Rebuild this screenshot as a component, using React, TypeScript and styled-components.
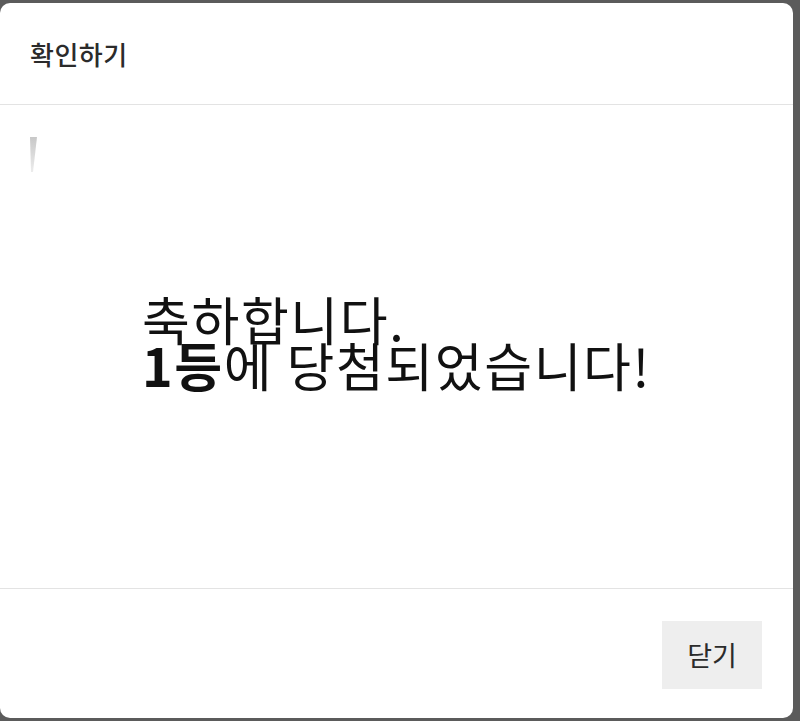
import React from 'react'
import styled, { createGlobalStyle } from 'styled-components'

const GlobalStyle = createGlobalStyle`
  html, body {
    margin: 0;
    padding: 0;
    background: #5b5b5b;
    font-family: 'Noto Sans CJK KR', 'Noto Sans', sans-serif;
  }
  #root {
    height: 721px;
    overflow: hidden;
  }
`

const Overlay = styled.div`
  height: 721px;
  padding-top: 3px;
  box-sizing: border-box;
`

const Dialog = styled.div`
  width: 793px;
  height: 715px;
  background: #ffffff;
  border-radius: 10px;
  display: flex;
  flex-direction: column;
  overflow: hidden;
`

const Header = styled.div`
  height: 102px;
  flex: none;
  display: flex;
  align-items: center;
  padding: 0 30px;
  border-bottom: 1px solid #e3e3e3;
  box-sizing: border-box;
`

const Title = styled.h2`
  margin: 0;
  font-size: 26px;
  font-weight: 500;
  color: #2b2b2b;
  letter-spacing: 0.5px;
`

const Body = styled.div`
  position: relative;
  flex: 1;
  display: flex;
  align-items: center;
  justify-content: center;
  padding-bottom: 10px;
  box-sizing: border-box;
`

const Message = styled.p`
  margin: 0;
  font-size: 52px;
  line-height: 46px;
  font-weight: 400;
  color: #111111;
  text-align: left;
  letter-spacing: 1.6px;

  & strong {
    font-weight: 700;
  }
`

// faded remnant of the image slot in the corner of the body
const ImageStub = styled.svg`
  position: absolute;
  left: 28px;
  top: 29px;
`

const Footer = styled.div`
  height: 130px;
  flex: none;
  display: flex;
  align-items: center;
  justify-content: flex-end;
  padding: 0 31px 0 0;
  border-top: 1px solid #e3e3e3;
  box-sizing: border-box;
`

const CloseButton = styled.button`
  width: 100px;
  height: 68px;
  border: none;
  background: #eeeeee;
  color: #2b2b2b;
  font-family: inherit;
  font-size: 27px;
  font-weight: 400;
  cursor: pointer;
  margin-top: 2px;
`

const App = () => {
  return (
    <>
      <GlobalStyle />
      <Overlay>
        <Dialog>
          <Header>
            <Title>확인하기</Title>
          </Header>
          <Body>
            <ImageStub width="12" height="40" viewBox="0 0 12 40">
              <defs>
                <linearGradient id="stub" x1="0" y1="0" x2="0" y2="1">
                  <stop offset="0" stopColor="#c8c8c8" />
                  <stop offset="1" stopColor="#ececec" />
                </linearGradient>
              </defs>
              <path d="M2 3 L9 3 L5 38 L3 38 Z" fill="url(#stub)" />
            </ImageStub>
            <Message>
              축하합니다.
              <br />
              <strong>1등</strong>에 당첨되었습니다!
            </Message>
          </Body>
          <Footer>
            <CloseButton>닫기</CloseButton>
          </Footer>
        </Dialog>
      </Overlay>
    </>
  )
}

export default App
